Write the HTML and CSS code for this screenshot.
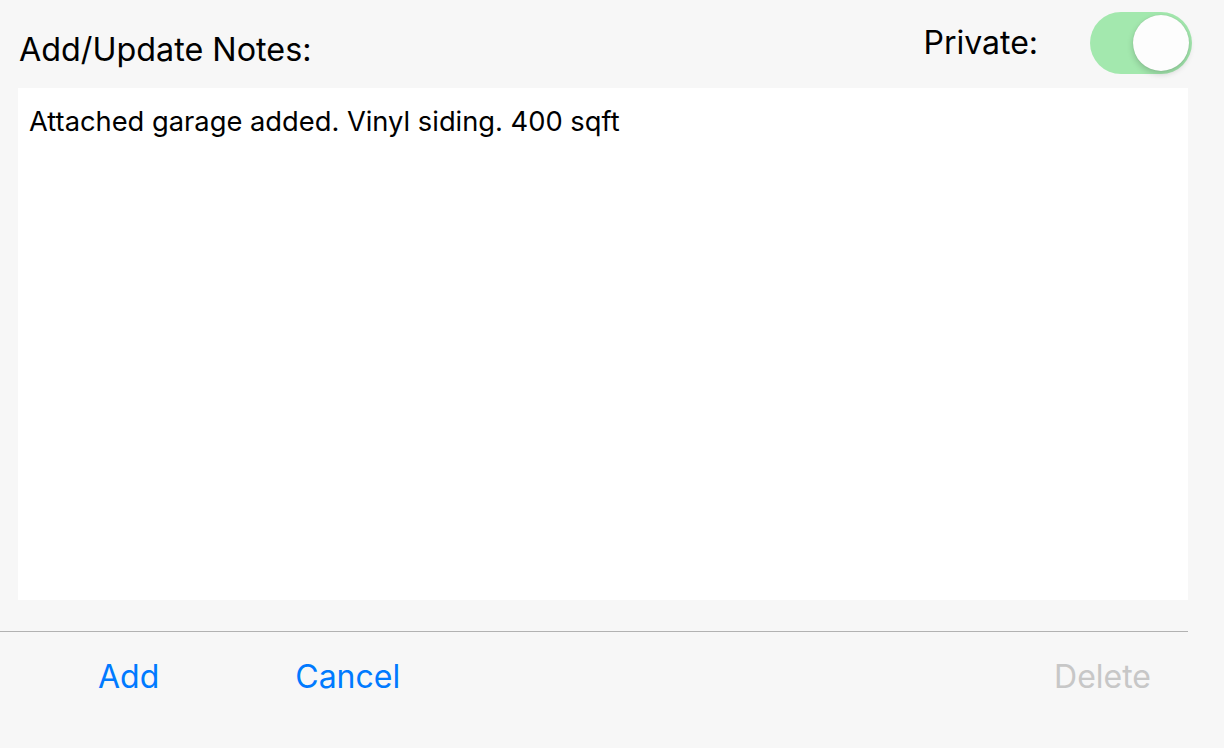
FILE: index.html
```html
<!DOCTYPE html>
<html lang="en">
  <head>
    <meta charset="UTF-8" />
    <title>Add/Update Notes</title>
    <link rel="stylesheet" href="styles.css">
  </head>
  <body>
    <div class="notes-page">
      <div class="notes-header">
        <h1 class="notes-title">Add/Update Notes:</h1>
        <div class="private-field">
          <span class="private-label">Private:</span>
          <span class="switch -on" role="switch" aria-checked="true"><span class="switch-knob"></span></span>
        </div>
      </div>
      <div class="notes-box">Attached garage added. Vinyl siding. 400 sqft</div>
      <div class="notes-footer">
        <a class="action -add" href="#">Add</a>
        <a class="action -cancel" href="#">Cancel</a>
        <a class="action -delete -disabled" href="#">Delete</a>
      </div>
    </div>
  </body>
</html>
```
FILE: styles.css
```css
* {
  margin: 0;
  padding: 0;
  box-sizing: border-box;
}

body {
  font-family: Inter, "Noto Sans", "Liberation Sans", sans-serif;
  background-color: #f7f7f7;
  color: #000;
}

.notes-page {
  width: 1224px;
  height: 748px;
}

.notes-header {
  display: flex;
  align-items: flex-start;
  justify-content: space-between;
  height: 88px;
  padding: 0 32px 0 19px;
}

.notes-title {
  margin-top: 31px;
  font-size: 32.3px;
  font-weight: 400;
  line-height: 38px;
}

.private-field {
  display: flex;
  align-items: flex-start;
}

.private-label {
  margin-top: 24px;
  font-size: 32px;
  line-height: 38px;
}

.switch {
  position: relative;
  display: block;
  margin: 12px 0 0 52px;
  width: 102px;
  height: 62px;
  border-radius: 31px;
  background-color: #a3e8ae;
}

.switch-knob {
  position: absolute;
  top: 3px;
  right: 3px;
  width: 56px;
  height: 56px;
  border-radius: 50%;
  background-color: #fdfdfd;
  box-shadow: 0 3px 6px rgba(0, 0, 0, 0.18), 0 0 1px rgba(0, 0, 0, 0.15);
}

.notes-box {
  margin: 0 36px 0 18px;
  height: 512px;
  padding: 18px 11px 0;
  font-size: 27.3px;
  line-height: 32px;
  background-color: #fff;
}

.notes-footer {
  display: flex;
  align-items: center;
  width: 1188px;
  height: 90px;
  margin-top: 31px;
  padding: 0 37px 0 98px;
  border-top: 1px solid #b2b2b2;
}

.action {
  font-size: 32px;
  line-height: 40px;
  color: #007aff;
  text-decoration: none;
}

.action.-cancel {
  margin-left: 136px;
}

.action.-delete {
  margin-left: auto;
}

.action.-disabled {
  color: #c7c7c7;
}
```
